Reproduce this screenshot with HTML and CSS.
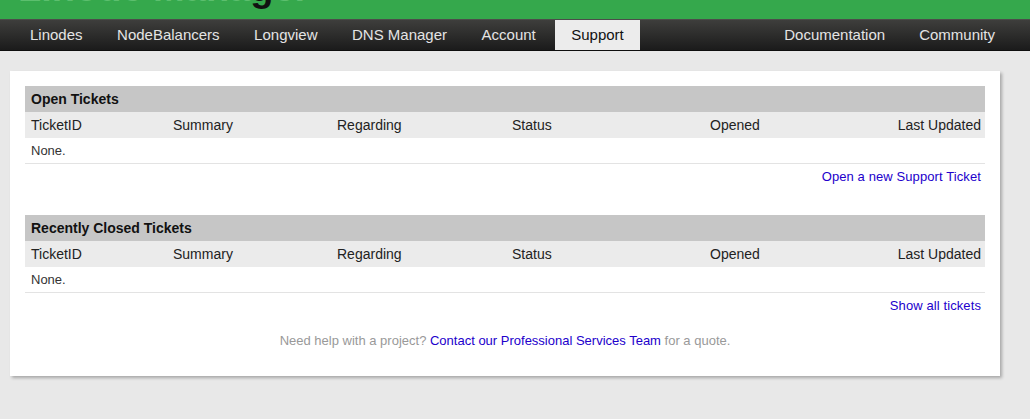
FILE: index.html
```html
<!DOCTYPE html>
<html lang="en">
<head>
<meta charset="utf-8">
<title>Linode Manager - Support</title>
<link rel="stylesheet" href="styles.css">
</head>
<body>
<header class="brand">
  <div class="logo"><span class="logo-light">Linode Mana</span><span class="logo-dark">g</span><span class="logo-light">er</span></div>
</header>
<nav class="topnav">
  <ul class="nav-list">
    <li class="nav-item">Linodes</li>
    <li class="nav-item">NodeBalancers</li>
    <li class="nav-item">Longview</li>
    <li class="nav-item">DNS Manager</li>
    <li class="nav-item">Account</li>
    <li class="nav-item nav-active">Support</li>
  </ul>
  <ul class="nav-list nav-right">
    <li class="nav-item">Documentation</li>
    <li class="nav-item">Community</li>
  </ul>
</nav>
<main class="card">
  <section class="tickets tickets-first">
    <h2 class="tickets-title">Open Tickets</h2>
    <table class="tickets-table">
      <colgroup>
        <col class="c1"><col class="c2"><col class="c3"><col class="c4"><col class="c5"><col class="c6">
      </colgroup>
      <thead>
        <tr><th>TicketID</th><th>Summary</th><th>Regarding</th><th>Status</th><th>Opened</th><th class="th-right">Last Updated</th></tr>
      </thead>
      <tbody>
        <tr><td colspan="6">None.</td></tr>
      </tbody>
    </table>
    <div class="tickets-action"><a href="#" class="link">Open a new Support Ticket</a></div>
  </section>
  <section class="tickets">
    <h2 class="tickets-title">Recently Closed Tickets</h2>
    <table class="tickets-table">
      <colgroup>
        <col class="c1"><col class="c2"><col class="c3"><col class="c4"><col class="c5"><col class="c6">
      </colgroup>
      <thead>
        <tr><th>TicketID</th><th>Summary</th><th>Regarding</th><th>Status</th><th>Opened</th><th class="th-right">Last Updated</th></tr>
      </thead>
      <tbody>
        <tr><td colspan="6">None.</td></tr>
      </tbody>
    </table>
    <div class="tickets-action"><a href="#" class="link">Show all tickets</a></div>
  </section>
  <p class="help">Need help with a project? <a href="#" class="link">Contact our Professional Services Team</a> for a quote.</p>
</main>
</body>
</html>
```
FILE: styles.css
```css
html, body {
  margin: 0;
  padding: 0;
}
body {
  background: #e8e8e8;
  font-family: "Liberation Sans", Arial, sans-serif;
  min-height: 419px;
}
.brand {
  height: 19px;
  background: #35a84c;
  overflow: hidden;
}
.logo {
  font-size: 38px;
  font-weight: bold;
  line-height: 38px;
  margin-top: -31px;
  padding-left: 18px;
  white-space: nowrap;
}
.logo-light { color: #5cbf6e; }
.logo-dark { color: #111; }

.topnav {
  display: flex;
  justify-content: space-between;
  height: 30px;
  background: linear-gradient(#3e3e3c, #1b1b1b);
  border-top: 1px solid #4c4c4a;
  border-bottom: 1px solid #0e0e0e;
}
.nav-list {
  display: flex;
  gap: 4.5px;
  margin: 0;
  padding: 0 0 0 15px;
  list-style: none;
}
.nav-right {
  gap: 4px;
  padding: 0 20px 0 0;
}
.nav-item {
  padding: 0 15px;
  line-height: 30px;
  font-size: 15px;
  color: #e4e4e4;
}
.nav-active {
  padding: 0 16px;
  background: #ececec;
  color: #111;
}

.card {
  display: block;
  margin: 20px 30px 0 10px;
  padding: 15px;
  background: #fff;
  box-shadow: 2px 2px 3px rgba(0, 0, 0, 0.28);
}
.tickets-first {
  margin-bottom: 25px;
}
.tickets-title {
  margin: 0;
  height: 26px;
  line-height: 26px;
  padding: 0 6px;
  background: #c6c6c6;
  font-size: 14px;
  font-weight: bold;
  color: #111;
}
.tickets-table {
  width: 100%;
  border-collapse: collapse;
  table-layout: fixed;
}
.c1 { width: 142px; }
.c2 { width: 164px; }
.c3 { width: 175px; }
.c4 { width: 198px; }
.c5 { width: 150px; }
.tickets-table th {
  height: 26px;
  padding: 0 6px;
  background: #ebebeb;
  font-size: 14px;
  font-weight: normal;
  text-align: left;
  color: #222;
}
.tickets-table th.th-right {
  text-align: right;
  padding-right: 4px;
}
.tickets-table td {
  height: 25px;
  padding: 0 6px;
  border-bottom: 1px solid #e3e3e3;
  font-size: 13px;
  color: #333;
}
.tickets-action {
  height: 26px;
  line-height: 26px;
  padding-right: 4px;
  text-align: right;
  font-size: 13px;
  letter-spacing: 0.1px;
}
.link {
  color: #2200cc;
  text-decoration: none;
}
.help {
  margin: 0;
  padding: 13px 0 11px;
  line-height: 18px;
  font-size: 13px;
  color: #999;
  text-align: center;
}
```
